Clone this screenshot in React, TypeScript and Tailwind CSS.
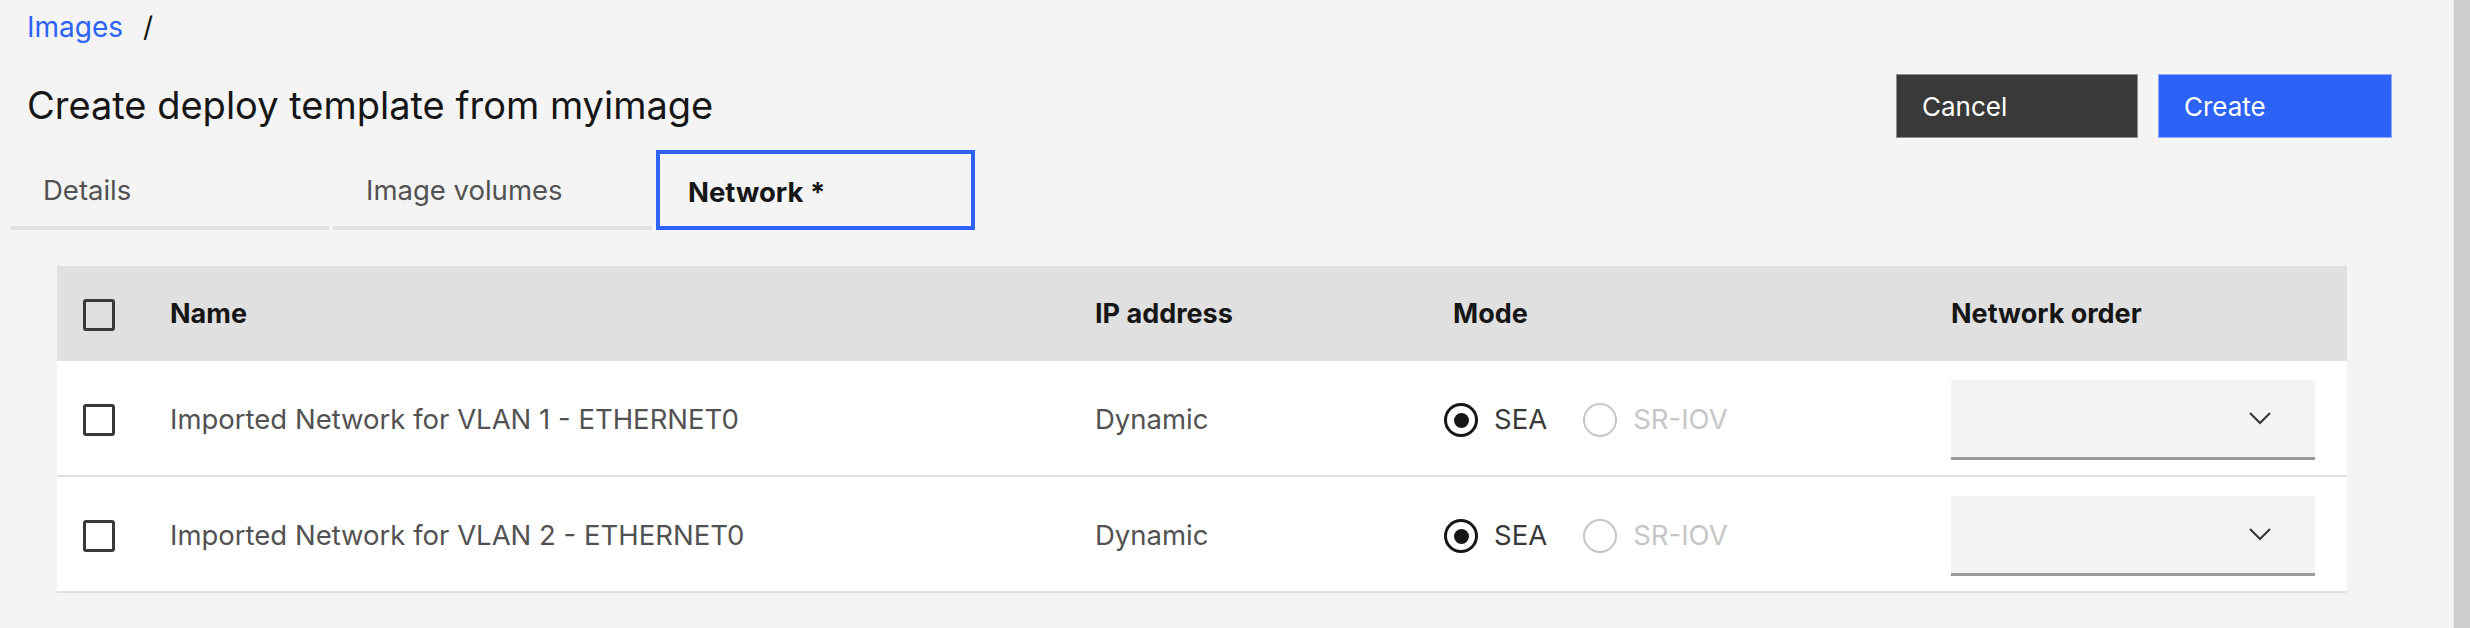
import clsx from "clsx";

const rows = [
  { name: "Imported Network for VLAN 1 - ETHERNET0", ip: "Dynamic" },
  { name: "Imported Network for VLAN 2 - ETHERNET0", ip: "Dynamic" },
];

function Checkbox({ white }: { white?: boolean }) {
  return (
    <span
      className={clsx(
        "block h-[32px] w-[32px] rounded-[3px] border-[3px] border-[#393939]",
        white ? "bg-white" : "bg-transparent"
      )}
    />
  );
}

function Radio({ label, checked, disabled }: { label: string; checked?: boolean; disabled?: boolean }) {
  return (
    <div className="flex items-center gap-[16px]">
      <span
        className={clsx(
          "flex h-[34px] w-[34px] items-center justify-center rounded-full",
          disabled ? "border-2 border-[#c6c6c6]" : "border-[3px] border-[#161616]"
        )}
      >
        {checked && <span className="h-[15px] w-[15px] rounded-full bg-[#161616]" />}
      </span>
      <span className={disabled ? "text-[#c6c6c6]" : "text-[#393939]"}>{label}</span>
    </div>
  );
}

function Dropdown() {
  return (
    <div className="flex h-[80px] w-[364px] items-center justify-end border-b-[3px] border-[#9a9a9a] bg-[#f4f4f4] pr-[44px]">
      <svg width="22" height="13" viewBox="0 0 22 13" fill="none">
        <polyline points="1,1 11,11 21,1" stroke="#393939" strokeWidth="2.2" />
      </svg>
    </div>
  );
}

function Tab({ label, active }: { label: string; active?: boolean }) {
  return (
    <div
      className={clsx(
        "flex h-[80px] w-[319px] items-center pt-[6px]",
        active
          ? "border-4 border-[#2c62f6] pl-[28px] font-bold text-[#161616]"
          : "border-b-4 border-[#e0e0e0] pl-[33px] text-[#525252]"
      )}
    >
      {label}
    </div>
  );
}

export default function App() {
  return (
    <div className="flex h-[628px] w-[2470px] overflow-hidden bg-[#f4f4f4] font-['Inter',sans-serif] text-[27.5px] text-[#161616]">
      <div className="flex flex-1 flex-col">
        <div className="flex h-[45px] items-start gap-[20px] pl-[27px] pt-[9px] text-[28px] leading-[36px]">
          <span className="text-[#2c62f6]">Images</span>
          <span>/</span>
        </div>

        <div className="mt-[29px] flex items-start justify-between pl-[27px] pr-[61px]">
          <h1 className="mt-[7px] text-[38px] leading-[48px]">Create deploy template from myimage</h1>
          <div className="flex gap-[20px] text-[26px]">
            <button className="h-[64px] w-[242px] border border-[#8d8d8d] bg-[#393939] pl-[25px] text-left text-white">
              Cancel
            </button>
            <button className="h-[64px] w-[234px] border border-[#8fa9f8] bg-[#2c62f6] pl-[25px] text-left text-white">
              Create
            </button>
          </div>
        </div>

        <div className="mt-[12px] flex gap-[4px] pl-[10px]">
          <Tab label="Details" />
          <Tab label="Image volumes" />
          <Tab label="Network *" active />
        </div>

        <div className="ml-[57px] mt-[36px] w-[2290px]">
          <div className="flex h-[95px] items-center bg-[#e0e0e0] pt-[2px] text-[27px] font-bold text-[#161616]">
            <div className="w-[113px] pl-[26px]">
              <Checkbox />
            </div>
            <div className="w-[925px]">Name</div>
            <div className="w-[349px]">IP address</div>
            <div className="w-[507px] pl-[9px]">Mode</div>
            <div className="flex-1">Network order</div>
          </div>
          {rows.map((r) => (
            <div key={r.name} className="flex h-[116px] items-center border-b-2 border-[#e0e0e0] bg-white pt-[4px] text-[#525252]">
              <div className="w-[113px] pl-[26px]">
                <Checkbox white />
              </div>
              <div className="w-[925px]">{r.name}</div>
              <div className="w-[349px]">{r.ip}</div>
              <div className="flex w-[507px] items-center gap-[36px]">
                <Radio label="SEA" checked />
                <Radio label="SR-IOV" disabled />
              </div>
              <div className="flex-1">
                <Dropdown />
              </div>
            </div>
          ))}
        </div>
      </div>
      <div className="w-[17px] border-l border-[#ececec] bg-[#cdcdcd]" />
    </div>
  );
}
